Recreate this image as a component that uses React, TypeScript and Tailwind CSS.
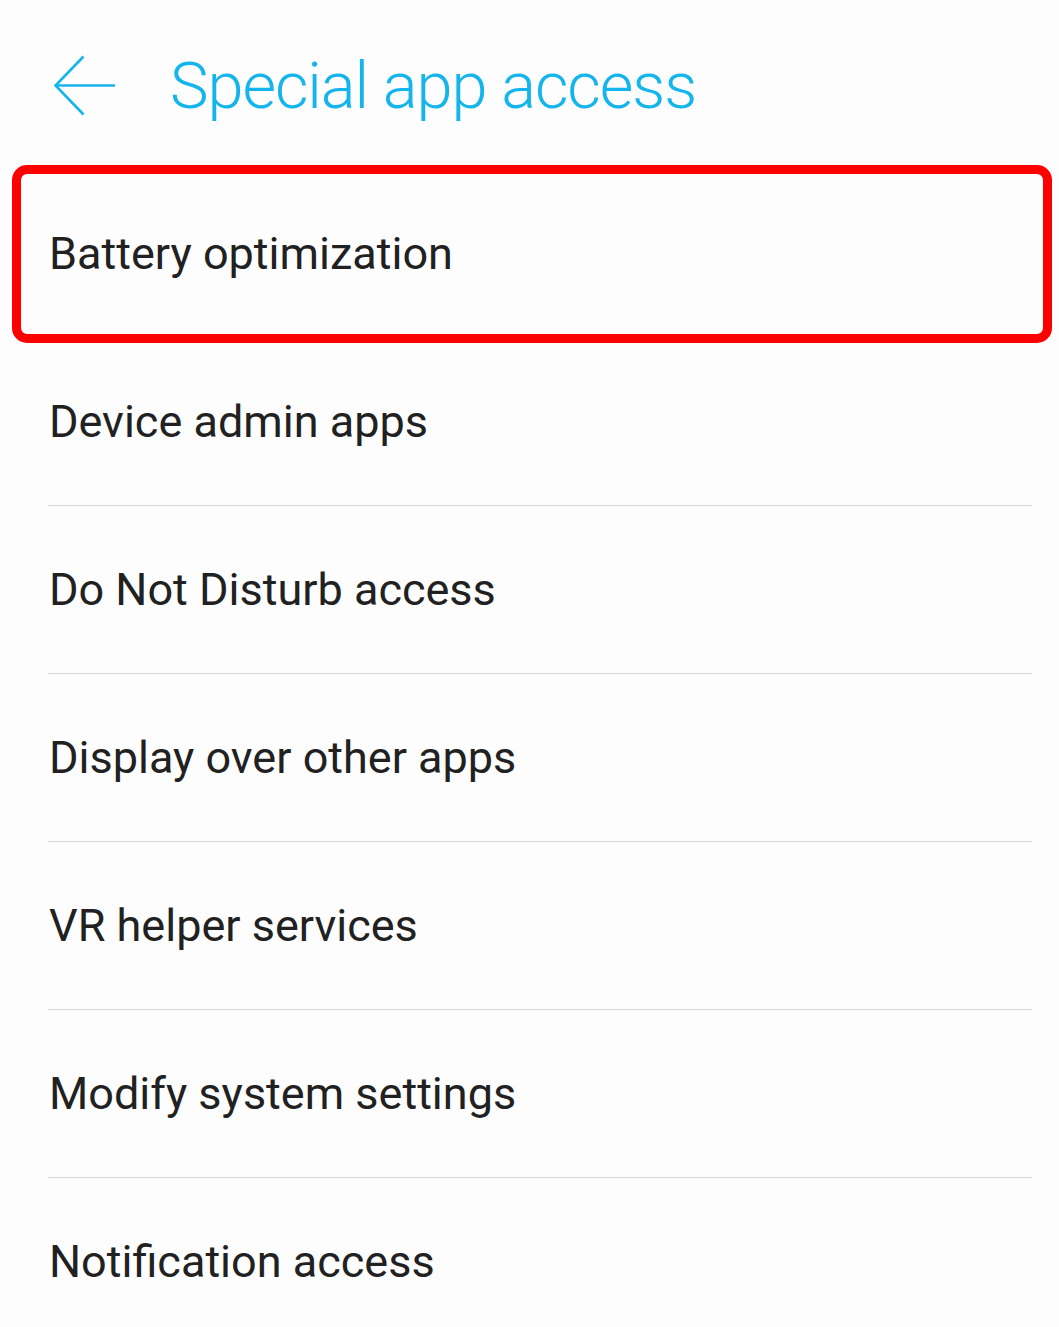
import React from 'react';

const items = [
  'Battery optimization',
  'Device admin apps',
  'Do Not Disturb access',
  'Display over other apps',
  'VR helper services',
  'Modify system settings',
  'Notification access',
];

const BackArrow = () => (
  <svg width="62" height="62" viewBox="0 0 62 62" fill="none" stroke="#14b4ec" strokeWidth="2.6">
    <path d="M1.5 30.5H61" />
    <path d="M29.5 1.5L1.5 30.5L29.5 59.5" strokeLinejoin="miter" />
  </svg>
);

export default function App() {
  return (
    <div className="w-[1059px] min-h-[1327px] overflow-hidden bg-[#fdfdfd] font-['Roboto',sans-serif]">
      <div className="flex h-[170px] items-center pl-[54px] pt-[2px]">
        <BackArrow />
        <h1 className="ml-[54px] text-[65px] font-light leading-none tracking-[-1.1px] text-[#14b4ec]">
          Special app access
        </h1>
      </div>
      <ul>
        {items.map((label, index) => (
          <li key={label} className="relative">
            <div className="ml-[48px] mr-[27px] flex h-[168px] items-center border-b border-[#d4d4d4]">
              <span className="pl-[1px] text-[45px] leading-none text-[#212121]">{label}</span>
            </div>
            {index === 0 && (
              <div className="absolute -top-[5px] -bottom-[5px] left-[12px] right-[7px] rounded-[15px] border-[9px] border-[#ff0000]" />
            )}
          </li>
        ))}
      </ul>
    </div>
  );
}
